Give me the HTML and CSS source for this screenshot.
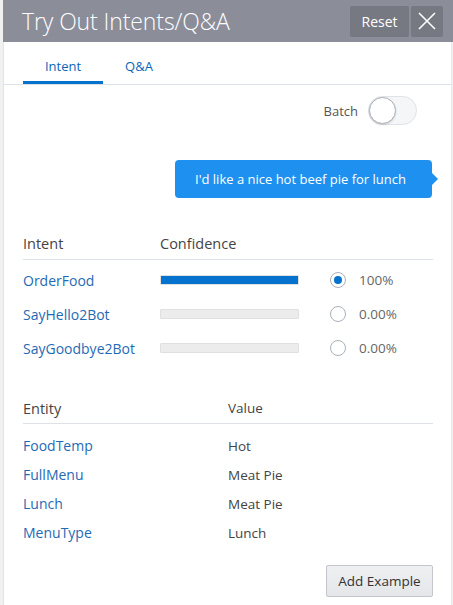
FILE: index.html
```html
<!DOCTYPE html>
<html>
<head>
<meta charset="utf-8">
<link rel="stylesheet" href="styles.css">
</head>
<body>
<div class="page">
  <div class="panel">
    <header class="head">
      <h1 class="title">Try Out Intents/Q&amp;A</h1>
      <div class="head-actions">
        <button class="btn-reset">Reset</button>
        <button class="btn-close" aria-label="Close">
          <svg width="18" height="18" viewBox="0 0 18 18"><path d="M1 1L17 17M17 1L1 17" stroke="#fff" stroke-width="1.6" fill="none"/></svg>
        </button>
      </div>
    </header>
    <nav class="tabs">
      <div class="tab active">Intent</div>
      <div class="tab">Q&amp;A</div>
    </nav>
    <div class="batch-row">
      <span class="batch-label">Batch</span>
      <span class="toggle"><span class="knob"></span></span>
    </div>
    <div class="bubble-row">
      <div class="bubble">I'd like a nice hot beef pie for lunch</div>
    </div>
    <div class="intent-table">
      <div class="trow thead">
        <span class="c-name">Intent</span>
        <span class="c-conf">Confidence</span>
      </div>
      <div class="trow">
        <span class="c-name link">OrderFood</span>
        <span class="c-conf"><span class="bar"><span class="fill" style="width:100%"></span></span></span>
        <span class="c-radio"><span class="radio on"></span></span>
        <span class="c-pct">100%</span>
      </div>
      <div class="trow">
        <span class="c-name link">SayHello2Bot</span>
        <span class="c-conf"><span class="bar"><span class="fill" style="width:0%"></span></span></span>
        <span class="c-radio"><span class="radio"></span></span>
        <span class="c-pct">0.00%</span>
      </div>
      <div class="trow">
        <span class="c-name link">SayGoodbye2Bot</span>
        <span class="c-conf"><span class="bar"><span class="fill" style="width:0%"></span></span></span>
        <span class="c-radio"><span class="radio"></span></span>
        <span class="c-pct">0.00%</span>
      </div>
    </div>
    <div class="entity-table">
      <div class="erow ehead">
        <span class="e-name">Entity</span>
        <span class="e-val">Value</span>
      </div>
      <div class="erow"><span class="e-name link">FoodTemp</span><span class="e-val">Hot</span></div>
      <div class="erow"><span class="e-name link">FullMenu</span><span class="e-val">Meat Pie</span></div>
      <div class="erow"><span class="e-name link">Lunch</span><span class="e-val">Meat Pie</span></div>
      <div class="erow"><span class="e-name link">MenuType</span><span class="e-val">Lunch</span></div>
    </div>
    <div class="foot">
      <button class="btn-add">Add Example</button>
    </div>
  </div>
</div>
</body>
</html>
```

FILE: styles.css
```css
* { box-sizing: border-box; }
html, body { margin: 0; padding: 0; }
body {
  width: 453px;
  height: 605px;
  overflow: hidden;
  background: #f1f1f1;
  font-family: "Open Sans", "Noto Sans", sans-serif;
}
.page {
  padding-left: 3px;
  padding-right: 1px;
  height: 605px;
}
.panel {
  background: #fff;
  height: 605px;
  border-right: 1px solid #e6e8eb;
  border-left: 1px solid #e4e4e4;
}
.head {
  height: 42px;
  background: #8b8d99;
  display: flex;
  align-items: center;
  justify-content: space-between;
  padding: 0 10px 0 19px;
  margin-left: -1px;
  margin-right: -2px;
}
.title {
  margin: 0;
  font-weight: 300;
  font-size: 23px;
  color: #fff;
  letter-spacing: -0.1px;
  line-height: 1;
  padding-top: 1px;
}
.head-actions { display: flex; gap: 2px; }
.btn-reset {
  height: 31px;
  width: 59px;
  background: #767882;
  color: #fff;
  border: none;
  border-radius: 2px;
  font-family: inherit;
  font-size: 14px;
  padding: 0;
}
.btn-close {
  height: 31px;
  width: 32px;
  background: #767882;
  border: none;
  border-radius: 2px;
  padding: 0;
  display: flex;
  align-items: center;
  justify-content: center;
}
.tabs {
  display: flex;
  padding-left: 19px;
  height: 43px;
  border-bottom: 1px solid #dde2e8;
}
.tab {
  font-size: 13px;
  color: #0a66b8;
  height: 42px;
  display: flex;
  align-items: center;
  justify-content: center;
  padding-top: 5px;
}
.tab.active {
  width: 80px;
  border-bottom: 3px solid #0572ce;
  padding-top: 8px;
}
.tab:not(.active) { width: 56px; margin-left: 8px; }
.batch-row {
  display: flex;
  justify-content: flex-end;
  align-items: center;
  padding: 11px 34px 0 0;
  height: 40px;
  gap: 10px;
}
.batch-label { font-size: 13px; color: #555; }
.toggle {
  width: 49px;
  height: 29px;
  border-radius: 15px;
  background: #f5f6f8;
  border: 1px solid #dfe2e6;
  position: relative;
  display: block;
}
.knob {
  position: absolute;
  left: 0;
  top: 0;
  width: 27px;
  height: 27px;
  border-radius: 50%;
  background: #fff;
  border: 1px solid #a9adb3;
  box-shadow: 0 1px 2px rgba(0,0,0,0.15);
}
.bubble-row {
  display: flex;
  justify-content: flex-end;
  padding: 35px 19px 0 0;
}
.bubble {
  position: relative;
  background: #1e90ef;
  color: #fff;
  font-size: 13px;
  height: 38px;
  line-height: 38px;
  padding: 0 0 0 20px;
  border-radius: 4px;
  width: 257px;
  white-space: nowrap;
}
.bubble::after {
  content: "";
  position: absolute;
  right: -6px;
  top: 13px;
  border-top: 6px solid transparent;
  border-bottom: 6px solid transparent;
  border-left: 6px solid #1e90ef;
}
.intent-table {
  margin: 28px 18px 0 19px;
}
.trow {
  display: flex;
  align-items: center;
  height: 34px;
  font-size: 14px;
}
.thead {
  height: 34px;
  border-bottom: 1px solid #dde2e8;
  color: #444;
  font-size: 14.5px;
  padding-top: 1px;
  margin-bottom: 3px;
}
.c-name { width: 137px; }
.c-conf { width: 170px; display: flex; }
.c-radio { width: 29px; display: flex; }
.c-pct { color: #666; font-size: 13.5px; }
.link { color: #1f6ab5; }
.bar {
  display: block;
  width: 139px;
  height: 10px;
  background: #ececec;
  border: 1px solid #e0e0e0;
  border-radius: 1px;
  overflow: hidden;
}
.fill { display: block; height: 100%; background: #0572ce; }
.radio {
  width: 16px;
  height: 16px;
  border-radius: 50%;
  border: 1px solid #a9b1ba;
  background: #fff;
  display: block;
  position: relative;
}
.radio.on::after {
  content: "";
  position: absolute;
  left: 3px;
  top: 3px;
  width: 8px;
  height: 8px;
  border-radius: 50%;
  background: #0572ce;
}
.entity-table {
  margin: 28px 18px 0 19px;
}
.erow {
  display: flex;
  align-items: center;
  height: 29px;
  font-size: 14px;
}
.ehead {
  height: 31px;
  border-bottom: 1px solid #dde2e8;
  color: #444;
  font-size: 14.5px;
  margin-bottom: 7px;
}
.e-name { width: 205px; }
.e-val { color: #444; font-size: 13.5px; }
.foot {
  display: flex;
  justify-content: flex-end;
  padding: 18px 18px 0 0;
}
.btn-add {
  width: 107px;
  height: 32px;
  background: linear-gradient(#eef0f2, #e4e6e9);
  border: 1px solid #c3c6ca;
  border-radius: 2px;
  font-family: inherit;
  font-size: 13.5px;
  color: #333;
  padding: 0;
}
```
